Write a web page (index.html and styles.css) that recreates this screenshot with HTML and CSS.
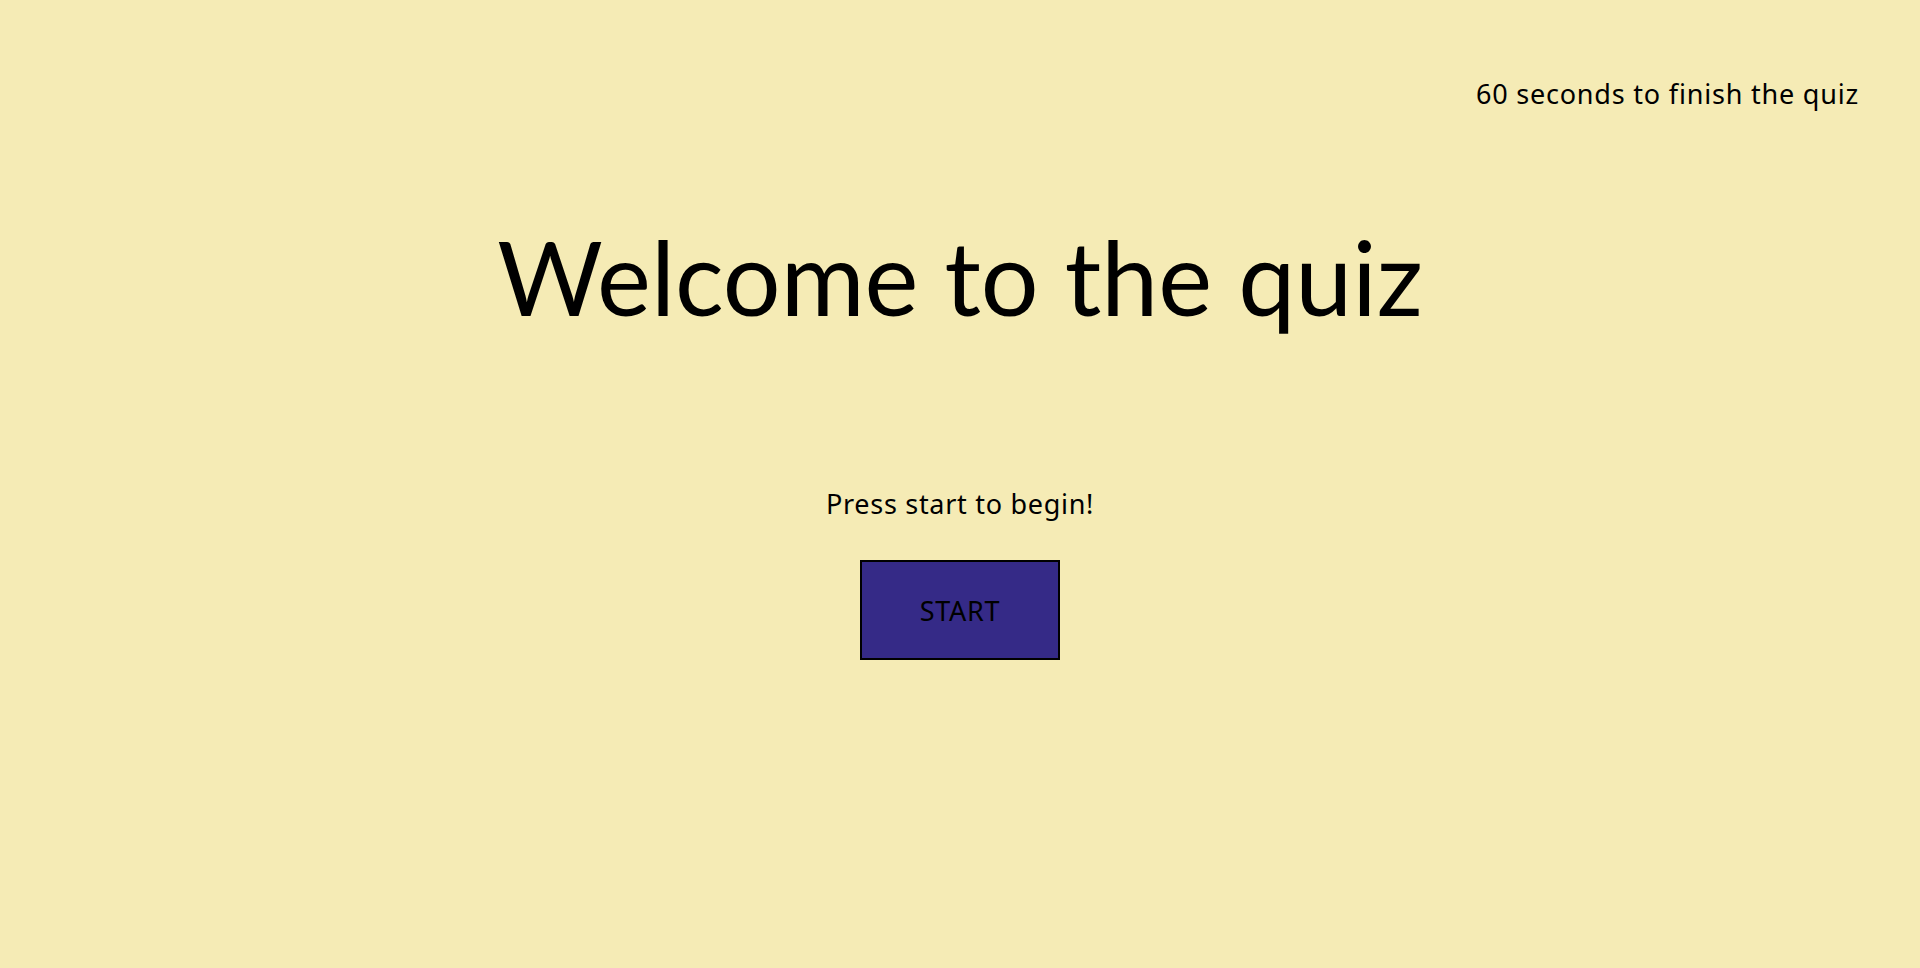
FILE: index.html
```html
<!DOCTYPE html>
<html lang="en">
<head>
<meta charset="utf-8">
<title>Quiz</title>
<link rel="stylesheet" href="styles.css">
</head>
<body>
  <header class="topbar">
    <p class="timer">60 seconds to finish the quiz</p>
  </header>
  <main class="intro">
    <h1 class="title">Welcome to the quiz</h1>
    <p class="prompt">Press start to begin!</p>
    <button class="start-btn" type="button">START</button>
  </main>
</body>
</html>
```
FILE: styles.css
```css
html, body {
  margin: 0;
  padding: 0;
}
body {
  background: #f5ebb5;
  color: #000;
  font-family: "Trebuchet MS", "Noto Sans", sans-serif;
  min-height: 968px;
}
.topbar {
  display: flex;
  justify-content: flex-end;
  padding: 79px 61px 0 0;
}
.timer {
  margin: 0;
  font-size: 27px;
  line-height: 30px;
  letter-spacing: 0.8px;
}
.intro {
  display: flex;
  flex-direction: column;
  align-items: center;
}
.title {
  margin: 108px 0 0;
  font-family: "Trebuchet MS", "Lato", sans-serif;
  font-size: 102px;
  font-weight: 400;
  line-height: 120px;
}
.prompt {
  margin: 152px 0 0;
  font-size: 27px;
  line-height: 30px;
  letter-spacing: 0.7px;
}
.start-btn {
  margin-top: 41px;
  box-sizing: border-box;
  width: 200px;
  height: 100px;
  background: #352a87;
  border: 2px solid #000;
  color: #000;
  font-family: inherit;
  font-size: 27px;
  letter-spacing: 0.7px;
  padding: 0;
  display: flex;
  align-items: center;
  justify-content: center;
}
```
